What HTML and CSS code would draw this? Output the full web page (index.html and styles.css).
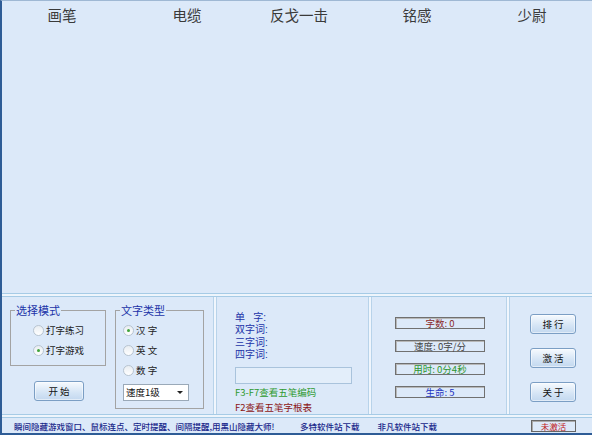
FILE: index.html
```html
<!DOCTYPE html>
<html>
<head>
<meta charset="utf-8">
<link rel="stylesheet" href="styles.css">
</head>
<body>
<div class="app">
  <div class="canvas">
    <span class="word w1">画笔</span>
    <span class="word w2">电缆</span>
    <span class="word w3">反戈一击</span>
    <span class="word w4">铭感</span>
    <span class="word w5">少尉</span>
  </div>
  <div class="hsep"></div>
  <div class="panels">
    <div class="col col-a">
      <div class="left-stack">
        <fieldset class="group g-mode">
          <legend>选择模式</legend>
          <div class="inner mode-inner">
            <div class="radio"><span class="dot"></span>打字练习</div>
            <div class="radio"><span class="dot on"></span>打字游戏</div>
          </div>
        </fieldset>
        <button class="btn start">开 始</button>
      </div>
      <fieldset class="group g-type">
        <legend>文字类型</legend>
        <div class="inner type-inner">
          <div class="radio"><span class="dot on"></span>汉 字</div>
          <div class="radio"><span class="dot"></span>英 文</div>
          <div class="radio"><span class="dot"></span>数 字</div>
          <div class="select">速度1级<span class="arrow"></span></div>
        </div>
      </fieldset>
    </div>
    <div class="vsep"></div>
    <div class="col col-b">
      <div class="labels">
        <div class="lab">单&nbsp;&nbsp;&nbsp;字:</div>
        <div class="lab">双字词:</div>
        <div class="lab">三字词:</div>
        <div class="lab">四字词:</div>
      </div>
      <div class="input"></div>
      <div class="hint green">F3-F7查看五笔编码</div>
      <div class="hint red">F2查看五笔字根表</div>
    </div>
    <div class="vsep"></div>
    <div class="col col-c">
      <div class="stat s1">字数: 0</div>
      <div class="stat s2">速度: 0字/分</div>
      <div class="stat s3">用时: 0分4秒</div>
      <div class="stat s4">生命: 5</div>
    </div>
    <div class="vsep"></div>
    <div class="col col-d">
      <button class="btn">排 行</button>
      <button class="btn">激 活</button>
      <button class="btn">关 于</button>
    </div>
  </div>
  <div class="hsep"></div>
  <div class="status">
    <span class="ad">瞬间隐藏游戏窗口、鼠标连点、定时提醒、间隔提醒,用黑山隐藏大师!</span>
    <span class="link l1">多特软件站下载</span>
    <span class="link l2">非凡软件站下载</span>
    <span class="badge">未激活</span>
  </div>
</div>
</body>
</html>
```
FILE: styles.css
```css
* { box-sizing: border-box; }
html, body { margin: 0; padding: 0; }
body {
  width: 592px;
  height: 435px;
  overflow: hidden;
  font-family: "Noto Sans CJK SC", "Liberation Sans", sans-serif;
  font-size: 11px;
  background: #dce9f9;
}
.app {
  width: 592px;
  height: 435px;
  display: flex;
  flex-direction: column;
  border-left: 2px solid #2e5c96;
  border-bottom: 2px solid #2e5c96;
  border-top: 1px solid #9fb8d4;
  background: #dce9f9;
}
.canvas {
  height: 292px;
  flex-shrink: 0;
  display: flex;
  align-items: flex-start;
  padding-top: 5px;
}
.word {
  font-size: 14.5px;
  color: #3a3a3a;
  line-height: 18px;
  text-align: center;
  flex-shrink: 0;
}
.w1 { width: 120px; }
.w2 { width: 130px; }
.w3 { width: 94px; }
.w4 { width: 142px; }
.w5 { width: 88px; }
.hsep {
  height: 4px;
  flex-shrink: 0;
  border-top: 1px solid #a6cbe6;
  border-bottom: 1px solid #a6cbe6;
  background: #eef5fc;
}
.panels {
  height: 117px;
  flex-shrink: 0;
  display: flex;
}
.vsep {
  width: 4px;
  flex-shrink: 0;
  border-left: 1px solid #b8d3ea;
  border-right: 1px solid #b8d3ea;
  background: #f0f6fd;
}
.col { flex-shrink: 0; }
.col-a {
  width: 211px;
  display: flex;
  padding: 6px 0 0 8px;
  gap: 9px;
}
.left-stack {
  display: flex;
  flex-direction: column;
  width: 96px;
}
.group {
  margin: 0;
  border: 1px solid #a3a3a3;
  padding: 0;
}
.group legend {
  color: #1b33a8;
  font-size: 11px;
  padding: 0 1px;
  margin-left: 4px;
  line-height: 14px;
}
.g-mode {
  height: 63px;
}
.mode-inner { padding: 3px 0 0 22px; }
.g-type {
  width: 89px;
  height: 106px;
}
.type-inner { padding: 3px 0 0 7px; }
.radio {
  display: flex;
  align-items: center;
  height: 20px;
  color: #222;
  font-size: 9.5px;
  white-space: nowrap;
}
.dot {
  width: 11px;
  height: 11px;
  border-radius: 50%;
  border: 1px solid #b8c4d0;
  background: linear-gradient(#e8edf2, #ffffff);
  margin-right: 2px;
  position: relative;
  flex-shrink: 0;
}
.dot.on::after {
  content: "";
  position: absolute;
  left: 3px;
  top: 3px;
  width: 3px;
  height: 3px;
  border-radius: 50%;
  background: #3fa33a;
}
.btn {
  font-family: "Noto Sans CJK SC", sans-serif;
  font-size: 9.5px;
  color: #111;
  width: 48px;
  height: 20px;
  padding: 0;
  border: 1px solid #7b9ec4;
  border-radius: 3px;
  background: linear-gradient(#f6fafe, #d4e4f5 60%, #c3d8ef);
  box-shadow: inset 0 0 0 1px #ffffff80;
}
.start {
  margin: 15px 0 0 24px;
  width: 50px;
}
.select {
  margin-top: 4px;
  width: 66px;
  height: 17px;
  background: #fff;
  border: 1px solid #9aa9b8;
  font-size: 9.5px;
  color: #111;
  line-height: 15px;
  padding-left: 2px;
  position: relative;
}
.arrow {
  position: absolute;
  right: 5px;
  top: 6px;
  border-left: 3px solid transparent;
  border-right: 3px solid transparent;
  border-top: 3px solid #222;
}
.col-b {
  width: 151px;
  padding: 15px 0 0 18px;
  display: flex;
  flex-direction: column;
}
.labels {
  color: #1b33a8;
  font-family: "Liberation Sans", "Noto Sans CJK SC", sans-serif;
  font-size: 10px;
}
.lab {
  height: 12.3px;
  line-height: 12px;
  white-space: nowrap;
}
.input {
  margin-top: 6px;
  width: 117px;
  height: 18px;
  background: #e3eefa;
  border: 1px solid #a9c3dc;
}
.hint {
  font-size: 9.5px;
  line-height: 14px;
  white-space: nowrap;
}
.hint.green { color: #2e9a2e; margin-top: 1px; }
.hint.red { color: #8b1515; margin-top: 1px; }
.col-c {
  width: 134px;
  display: flex;
  flex-direction: column;
  align-items: flex-start;
  padding: 20px 0 0 23px;
  gap: 11px;
}
.stat {
  width: 90px;
  height: 12px;
  border: 1px solid #707070;
  box-shadow: inset 1px 1px 0 #b8b8b8;
  font-size: 9.5px;
  line-height: 10px;
  text-align: center;
  white-space: nowrap;
}
.s1 { color: #8a2a2a; }
.s2 { color: #444; }
.s3 { color: #2e962e; }
.s4 { color: #1b33c0; }
.col-d {
  flex: 1;
  display: flex;
  flex-direction: column;
  padding: 17px 0 0 20px;
  gap: 14px;
}
.col-d .btn { width: 46px; height: 20px; }
.status {
  height: 15px;
  flex-shrink: 0;
  display: flex;
  align-items: center;
  font-size: 8.5px;
  padding-left: 12px;
  white-space: nowrap;
}
.ad { color: #18268a; width: 286px; flex-shrink: 0; font-weight: 500; }
.link { color: #18268a; flex-shrink: 0; font-weight: 500; }
.l2 { margin-left: 18px; }
.badge {
  margin-left: 94px;
  width: 45px;
  height: 12px;
  border: 1px solid #666;
  box-shadow: inset 1px 1px 0 #aaa;
  color: #c01818;
  text-align: center;
  line-height: 10px;
  flex-shrink: 0;
}
```
